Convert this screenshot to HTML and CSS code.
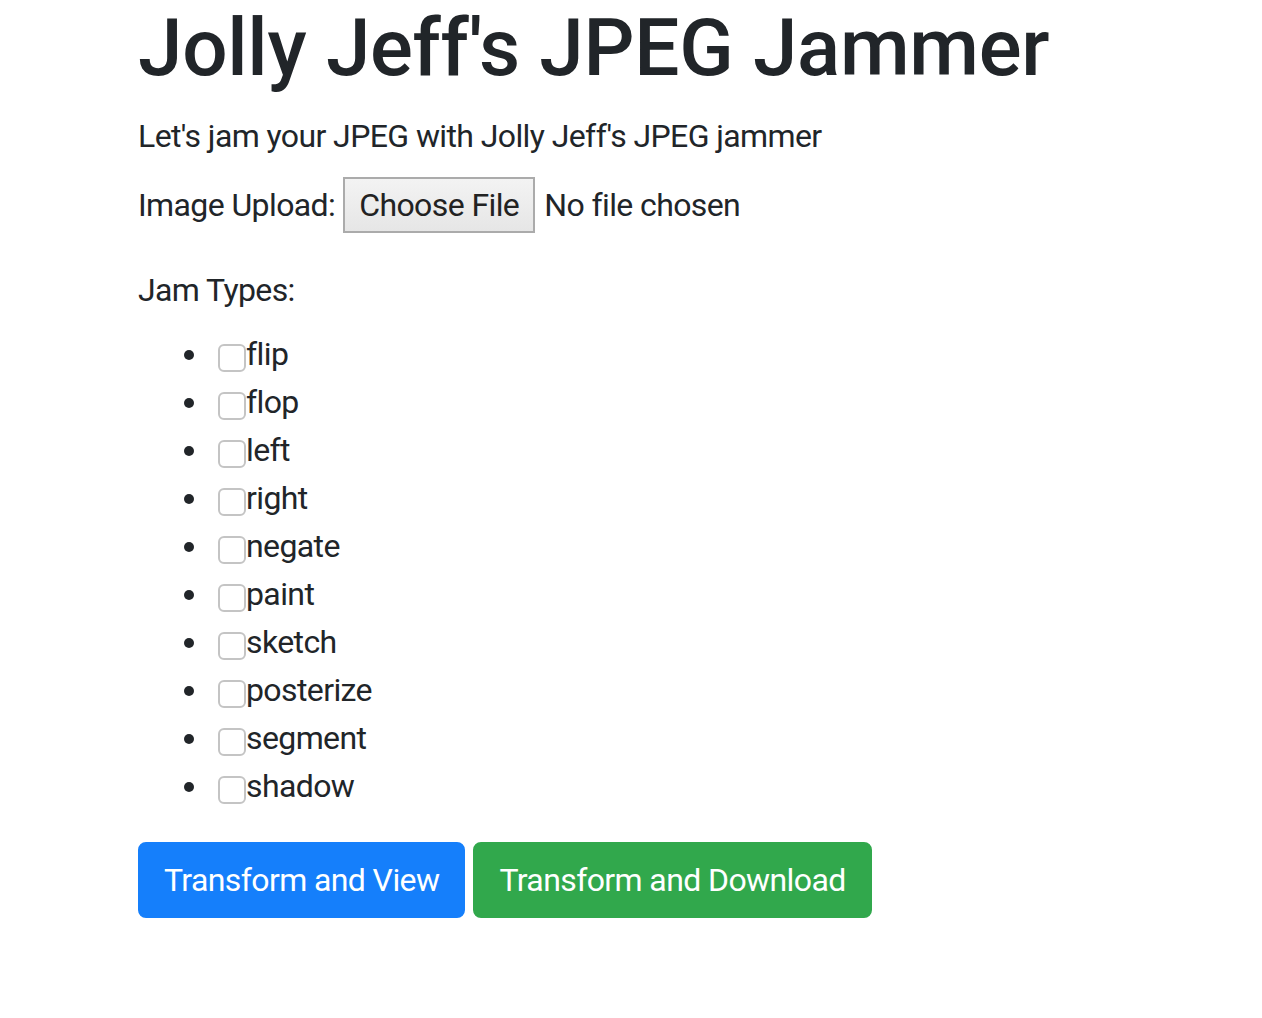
FILE: index.html
```html
<!DOCTYPE html>
<html lang="en">
<head>
<meta charset="utf-8">
<title>Jolly Jeff's JPEG Jammer</title>
<link rel="stylesheet" href="styles.css">
</head>
<body>
<main class="container">
  <h1 class="title">Jolly Jeff's JPEG Jammer</h1>
  <p class="lead">Let's jam your JPEG with Jolly Jeff's JPEG jammer</p>
  <form class="form">
    <div class="upload-row">
      <span class="label">Image Upload:</span>
      <span class="file-btn">Choose File</span>
      <span class="file-name">No file chosen</span>
    </div>
    <div class="jam-label">Jam Types:</div>
    <ul class="jam-list">
      <li><span class="check"></span>flip</li>
      <li><span class="check"></span>flop</li>
      <li><span class="check"></span>left</li>
      <li><span class="check"></span>right</li>
      <li><span class="check"></span>negate</li>
      <li><span class="check"></span>paint</li>
      <li><span class="check"></span>sketch</li>
      <li><span class="check"></span>posterize</li>
      <li><span class="check"></span>segment</li>
      <li><span class="check"></span>shadow</li>
    </ul>
    <div class="actions">
      <button type="button" class="btn btn-blue">Transform and View</button>
      <button type="button" class="btn btn-green">Transform and Download</button>
    </div>
  </form>
</main>
</body>
</html>
```
FILE: styles.css
```css
html, body {
  margin: 0;
  padding: 0;
  background: #ffffff;
}
body {
  font-family: Roboto, "Helvetica Neue", Arial, sans-serif;
  font-size: 32px;
  line-height: 48px;
  color: #212529;
  letter-spacing: -0.6px;
}
.container {
  padding-left: 138px;
}
.title {
  font-size: 80px;
  font-weight: 500;
  line-height: 96px;
  margin: 0 0 16px 0;
  letter-spacing: -0.3px;
}
.lead {
  margin: 0 0 16px 0;
}
.upload-row {
  display: flex;
  align-items: center;
  height: 58px;
}
.label {
  margin-right: 8px;
}
.file-btn {
  display: inline-flex;
  align-items: center;
  height: 52px;
  padding: 0 14px;
  border: 2px solid #ababab;
  background: linear-gradient(#f3f3f3, #e6e6e6);
  color: #222;
}
.file-name {
  margin-left: 9px;
}
.jam-label {
  margin-top: 32px;
}
.jam-list {
  list-style: none;
  margin: 16px 0 32px 0;
  padding-left: 46px;
}
.jam-list li::before {
  content: "";
  display: inline-block;
  width: 10px;
  height: 10px;
  border-radius: 50%;
  background: #212529;
  vertical-align: 5px;
  margin-right: 24px;
}
.check {
  display: inline-block;
  width: 24px;
  height: 24px;
  border: 2px solid #c4c4c4;
  border-radius: 6px;
  vertical-align: -7px;
  background: #fff;
}
.actions {
  display: flex;
  gap: 8px;
}
.btn {
  font-family: inherit;
  font-size: 32px;
  line-height: 48px;
  letter-spacing: -0.6px;
  padding: 12px 24px;
  border: 2px solid transparent;
  border-radius: 8px;
  color: #fff;
  cursor: pointer;
}
.btn-blue {
  background: #157ffb;
  border-color: #157ffb;
}
.btn-green {
  background: #31a84c;
  border-color: #31a84c;
}
```
